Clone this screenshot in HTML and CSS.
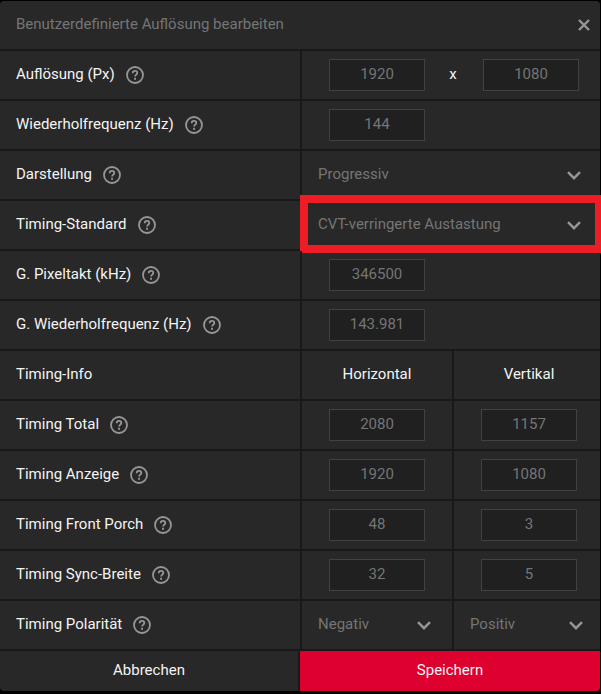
FILE: index.html
```html
<!DOCTYPE html>
<html lang="de">
<head>
<meta charset="utf-8">
<meta name="viewport" content="width=device-width, initial-scale=1">
<title>Benutzerdefinierte Auflösung bearbeiten</title>
<link rel="stylesheet" href="styles.css">
</head>
<body>
<svg class="sprite" aria-hidden="true">
  <symbol id="help" viewBox="0 0 18 18">
    <circle cx="9" cy="9" r="8" fill="none" stroke="currentColor" stroke-width="1.8"/>
    <path d="M6.7 7.2C6.7 5.7 7.6 4.9 9 4.9s2.3.8 2.3 2.1c0 1.5-2.2 1.7-2.2 3.5" fill="none" stroke="currentColor" stroke-width="1.8"/>
    <path d="M8.1 11.8h1.9v1.9H8.1z" fill="currentColor"/>
  </symbol>
  <symbol id="chevron" viewBox="0 0 14 9">
    <path d="M1 1.2l6 6 6-6" fill="none" stroke="currentColor" stroke-width="2.4"/>
  </symbol>
</svg>
<form class="dialog">
  <header class="titlebar">
    <h1 class="title">Benutzerdefinierte Auflösung bearbeiten</h1>
    <button class="close" type="button" aria-label="Schließen">
      <svg class="close-icon" viewBox="0 0 12 12"><path d="M1 1l10 10M11 1L1 11" fill="none" stroke="currentColor" stroke-width="2.4"/></svg>
    </button>
  </header>

  <div class="row">
    <div class="name"><label for="width">Auflösung (Px)</label><button class="help" type="button" aria-label="Hilfe"><svg><use href="#help"/></svg></button></div>
    <div class="value"><input class="box" id="width" value="1920"><span class="times">x</span><input class="box" aria-label="Höhe" value="1080"></div>
  </div>
  <div class="row">
    <div class="name"><label for="rate">Wiederholfrequenz (Hz)</label><button class="help" type="button" aria-label="Hilfe"><svg><use href="#help"/></svg></button></div>
    <div class="value"><input class="box" id="rate" value="144"></div>
  </div>
  <div class="row">
    <div class="name"><label for="scan">Darstellung</label><button class="help" type="button" aria-label="Hilfe"><svg><use href="#help"/></svg></button></div>
    <div class="value value-picker"><div class="picker"><select id="scan"><option>Progressiv</option></select><svg class="chevron"><use href="#chevron"/></svg></div></div>
  </div>
  <div class="row">
    <div class="name"><label for="standard">Timing-Standard</label><button class="help" type="button" aria-label="Hilfe"><svg><use href="#help"/></svg></button></div>
    <div class="value value-picker marked"><div class="picker"><select id="standard"><option>CVT-verringerte Austastung</option></select><svg class="chevron"><use href="#chevron"/></svg></div></div>
  </div>
  <div class="row">
    <div class="name"><label for="clock">G. Pixeltakt (kHz)</label><button class="help" type="button" aria-label="Hilfe"><svg><use href="#help"/></svg></button></div>
    <div class="value"><input class="box" id="clock" value="346500"></div>
  </div>
  <div class="row">
    <div class="name"><label for="grate">G. Wiederholfrequenz (Hz)</label><button class="help" type="button" aria-label="Hilfe"><svg><use href="#help"/></svg></button></div>
    <div class="value"><input class="box" id="grate" value="143.981"></div>
  </div>

  <table class="timing">
    <colgroup><col class="col-name"><col class="col-h"><col></colgroup>
    <thead>
      <tr><th scope="col" class="first">Timing-Info</th><th scope="col"><span class="heading">Horizontal</span></th><th scope="col"><span class="heading">Vertikal</span></th></tr>
    </thead>
    <tbody>
      <tr>
        <th scope="row"><div class="name"><span>Timing Total</span><button class="help" type="button" aria-label="Hilfe"><svg><use href="#help"/></svg></button></div></th>
        <td><input class="box" aria-label="Timing Total Horizontal" value="2080"></td>
        <td><input class="box" aria-label="Timing Total Vertikal" value="1157"></td>
      </tr>
      <tr>
        <th scope="row"><div class="name"><span>Timing Anzeige</span><button class="help" type="button" aria-label="Hilfe"><svg><use href="#help"/></svg></button></div></th>
        <td><input class="box" aria-label="Timing Anzeige Horizontal" value="1920"></td>
        <td><input class="box" aria-label="Timing Anzeige Vertikal" value="1080"></td>
      </tr>
      <tr>
        <th scope="row"><div class="name"><span>Timing Front Porch</span><button class="help" type="button" aria-label="Hilfe"><svg><use href="#help"/></svg></button></div></th>
        <td><input class="box" aria-label="Timing Front Porch Horizontal" value="48"></td>
        <td><input class="box" aria-label="Timing Front Porch Vertikal" value="3"></td>
      </tr>
      <tr>
        <th scope="row"><div class="name"><span>Timing Sync-Breite</span><button class="help" type="button" aria-label="Hilfe"><svg><use href="#help"/></svg></button></div></th>
        <td><input class="box" aria-label="Timing Sync-Breite Horizontal" value="32"></td>
        <td><input class="box" aria-label="Timing Sync-Breite Vertikal" value="5"></td>
      </tr>
      <tr>
        <th scope="row"><div class="name"><span>Timing Polarität</span><button class="help" type="button" aria-label="Hilfe"><svg><use href="#help"/></svg></button></div></th>
        <td class="cell-picker"><div class="picker"><select aria-label="Timing Polarität Horizontal"><option>Negativ</option></select><svg class="chevron"><use href="#chevron"/></svg></div></td>
        <td class="cell-picker"><div class="picker"><select aria-label="Timing Polarität Vertikal"><option>Positiv</option></select><svg class="chevron"><use href="#chevron"/></svg></div></td>
      </tr>
    </tbody>
  </table>

  <footer class="actions">
    <button class="action" type="button">Abbrechen</button>
    <button class="action primary" type="submit">Speichern</button>
  </footer>
</form>
</body>
</html>
```
FILE: styles.css
```css
:root {
  --panel: #282828;
  --line: #191919;
  --muted: #757575;
  --icon: #969696;
}

* { box-sizing: border-box; }

body {
  margin: 0;
  padding: 1px 1px 3px 0;
  overflow-x: hidden;
  background: #000;
  color: #f4f4f4;
  font: 15px/20px Roboto, "Liberation Sans", sans-serif;
}

button, input, select {
  font: inherit;
  color: inherit;
  border: 0;
  margin: 0;
  padding: 0;
  background: none;
}

svg { display: block; }

.sprite { display: none; }

.dialog {
  background: var(--panel);
  border-radius: 4px;
}

.titlebar {
  display: flex;
  align-items: center;
  justify-content: space-between;
  height: 50px;
  padding: 0 10px 2px 16px;
  border-bottom: 2px solid var(--line);
}

.title {
  margin: 0;
  font: inherit;
  color: var(--muted);
}

.close {
  padding: 2px 0 0;
  color: var(--icon);
}

.close-icon {
  width: 12px;
  height: 12px;
}

.row {
  display: grid;
  grid-template-columns: 1fr 1fr;
  height: 50px;
}

.name, .value {
  display: flex;
  align-items: center;
  border-bottom: 2px solid var(--line);
}

.name {
  gap: 11px;
  padding: 0 0 2px 16px;
}

.help {
  padding-top: 2px;
  color: var(--icon);
}

.help svg {
  width: 18px;
  height: 18px;
}

.value {
  position: relative;
  padding-left: 27px;
  border-left: 2px solid var(--line);
}

.box {
  display: block;
  width: 96px;
  height: 32px;
  padding-bottom: 2px;
  border: 1px solid #414141;
  background: #202020;
  color: var(--muted);
  text-align: center;
}

.times {
  width: 58px;
  padding: 0 2px 2px 0;
  text-align: center;
}

.value-picker { padding-left: 0; }

.picker {
  display: grid;
  flex: 1;
  align-items: center;
  color: var(--muted);
}

.picker select {
  grid-area: 1 / 1;
  height: 48px;
  padding: 0 40px 2px 16px;
  appearance: none;
  cursor: pointer;
}

.chevron {
  grid-area: 1 / 1;
  justify-self: end;
  width: 14px;
  height: 9px;
  margin-right: 19px;
  color: var(--icon);
  pointer-events: none;
}

.marked::after {
  content: "";
  position: absolute;
  inset: -6px -3px -4px -2px;
  border: 8px solid #ee1c25;
  pointer-events: none;
}

.timing {
  width: 100%;
  table-layout: fixed;
  border-collapse: separate;
  border-spacing: 0;
}

.col-name { width: 50%; }
.col-h { width: 152px; }

.timing th, .timing td {
  height: 50px;
  padding: 0 0 0 27px;
  border-bottom: 2px solid var(--line);
  border-left: 2px solid var(--line);
  font-weight: 400;
  text-align: left;
}

.timing th[scope="row"], .timing .first {
  padding: 0;
  border-left: 0;
}

.timing .name { border: 0; }

.heading {
  display: block;
  width: 96px;
  text-align: center;
}

.timing thead th { padding-bottom: 2px; }

.timing thead .first { padding: 0 0 2px 16px; }

.timing .cell-picker { padding: 0; }

.cell-picker .chevron {
  justify-self: start;
  margin: 0 0 0 115px;
}

.actions {
  display: grid;
  grid-template-columns: 1fr 1fr;
  height: 40px;
}

.action {
  padding-bottom: 2px;
  border-right: 2px solid var(--line);
  border-bottom-left-radius: 4px;
}

.primary {
  border: 0;
  border-radius: 0 0 4px 0;
  background: #de002f;
}
```
